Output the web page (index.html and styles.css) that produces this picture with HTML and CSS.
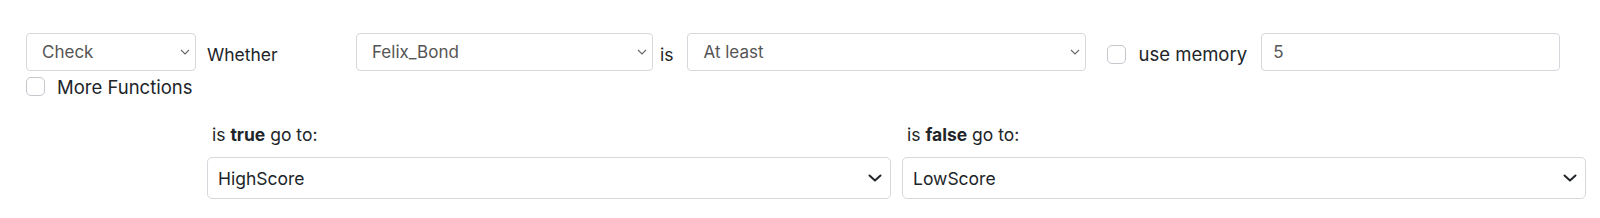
FILE: index.html
```html
<!DOCTYPE html>
<html lang="en">
<head>
<meta charset="UTF-8">
<title>Condition Step</title>
<link rel="stylesheet" href="styles.css">
</head>
<body>
  <div class="step">
    <div class="row-main">
      <div class="fn-col">
        <div class="sel sel-sm sel-fn">
          <select><option>Check</option></select>
          <svg class="chev-thin" viewBox="0 0 10 6"><path d="M1 1l4 4 4-4" fill="none" stroke="#666" stroke-width="1.1"/></svg>
        </div>
        <label class="check more">
          <span class="box"></span>
          More Functions
        </label>
      </div>
      <div class="word whether">Whether</div>
      <div class="sel sel-sm sel-var">
        <select><option>Felix_Bond</option></select>
        <svg class="chev-thin" viewBox="0 0 10 6"><path d="M1 1l4 4 4-4" fill="none" stroke="#666" stroke-width="1.1"/></svg>
      </div>
      <div class="word is">is</div>
      <div class="sel sel-sm sel-op">
        <select><option>At least</option></select>
        <svg class="chev-thin" viewBox="0 0 10 6"><path d="M1 1l4 4 4-4" fill="none" stroke="#666" stroke-width="1.1"/></svg>
      </div>
      <label class="check memory">
        <span class="box"></span>
        use memory
      </label>
      <input class="num" type="text" value="5">
    </div>

    <div class="row-goto">
      <div class="goto">
        <div class="goto-label">is <b>true</b> go to:</div>
        <div class="sel sel-lg">
          <select><option>HighScore</option></select>
          <svg class="chev-bold" viewBox="0 0 14 8"><path d="M1.5 1.5l5.5 5 5.5-5" fill="none" stroke="#212529" stroke-width="2" stroke-linecap="round" stroke-linejoin="round"/></svg>
        </div>
      </div>
      <div class="goto">
        <div class="goto-label">is <b>false</b> go to:</div>
        <div class="sel sel-lg">
          <select><option>LowScore</option></select>
          <svg class="chev-bold" viewBox="0 0 14 8"><path d="M1.5 1.5l5.5 5 5.5-5" fill="none" stroke="#212529" stroke-width="2" stroke-linecap="round" stroke-linejoin="round"/></svg>
        </div>
      </div>
    </div>
  </div>
</body>
</html>
```

FILE: styles.css
```css
body {
  margin: 0;
  background: #fff;
  font-family: Inter, "Liberation Sans", sans-serif;
  color: #212529;
  font-size: 17.5px;
}
.step {
  padding: 33px 26px 0 26px;
}
.row-main {
  display: flex;
  align-items: flex-start;
}
.fn-col {
  width: 170px;
}
.sel {
  position: relative;
}
.sel select {
  appearance: none;
  -webkit-appearance: none;
  width: 100%;
  background: #fff;
  border: 1px solid #d5d8dc;
  border-radius: 4px;
  font-family: inherit;
  font-size: 17px;
  color: #555;
  outline: none;
}
.sel-sm select {
  height: 38px;
  padding: 0 24px 0 15px;
}
.chev-thin {
  position: absolute;
  right: 6px;
  top: 16px;
  width: 10px;
  height: 6px;
}
.sel-var {
  width: 297px;
}
.sel-op {
  width: 399px;
}
.word {
  height: 38px;
  line-height: 44px;
  font-size: 17.5px;
}
.whether {
  width: 160px;
  padding-left: 11px;
  box-sizing: border-box;
}
.is {
  padding: 0 14px 0 7px;
}
.check {
  display: flex;
  align-items: center;
  gap: 12px;
  font-size: 18.5px;
}
.box {
  width: 17px;
  height: 17px;
  border: 1px solid #c3c7cc;
  border-radius: 5px;
  background: #fff;
}
.more {
  margin-top: 6px;
  height: 19px;
}
.memory {
  margin-left: 21px;
  height: 38px;
  padding-top: 4px;
  box-sizing: border-box;
}
.num {
  margin-left: 14px;
  width: 299px;
  height: 38px;
  box-sizing: border-box;
  border: 1px solid #d5d8dc;
  border-radius: 4px;
  padding: 0 11px;
  font-family: inherit;
  font-size: 17px;
  color: #555;
  outline: none;
}
.row-goto {
  display: grid;
  grid-template-columns: 684px 684px;
  gap: 11px;
  margin: 27px 0 0 181px;
}
.goto-label {
  font-size: 17.5px;
  line-height: 24px;
  margin-bottom: 10px;
  padding-left: 5px;
}
.sel-lg select {
  height: 42px;
  padding: 0 40px 0 10px;
  font-size: 17.5px;
  color: #212529;
  border-radius: 5px;
}
.chev-bold {
  position: absolute;
  right: 9px;
  top: 17px;
  width: 14px;
  height: 8px;
}
```
